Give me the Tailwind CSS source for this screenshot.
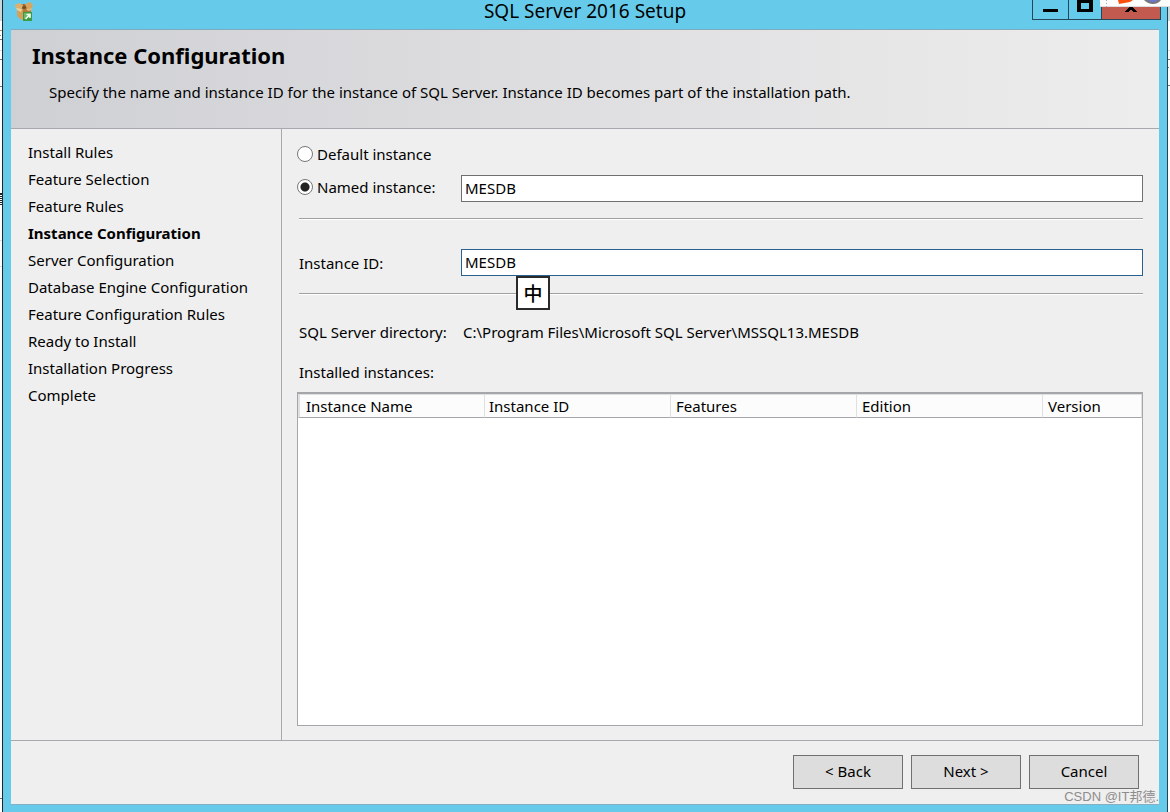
<!DOCTYPE html>
<html lang="en">
<head>
<meta charset="utf-8">
<meta name="viewport" content="width=device-width, initial-scale=1">
<title>SQL Server 2016 Setup</title>
<script src="https://cdn.jsdelivr.net/npm/@tailwindcss/browser@4"></script>
</head>
<body class="flex min-h-screen bg-white font-['Noto_Sans','Noto_Sans_CJK_SC',sans-serif] text-[15px] leading-5 text-black">
<!-- edge of the desktop behind the window, left -->
<div class="w-[2px] shrink-0" aria-hidden="true">
  <svg class="block" width="2" height="812" viewBox="0 0 2 812" shape-rendering="crispEdges">
    <path fill="#c9d6da" d="M0 0h2v21H0z"/>
    <path fill="#b08a5a" d="M0 30h2v1H0zM0 35h1v1H0z"/>
    <path fill="#777" d="M0 39h2v1H0zM0 59h2v1H0zM0 86h2v1H0z"/>
    <path fill="#ddd" d="M0 50h2v1H0zM0 240h2v1H0zM0 266h2v1H0z"/>
    <path fill="#222" d="M0 193h2v2H0zM0 196h2v1H0zM0 198h2v1H0zM0 200h2v1H0zM0 202h2v1H0zM0 204h2v1H0z"/>
    <path fill="#777" d="M0 798h2v1H0z"/>
  </svg>
</div>
<div class="relative flex min-w-0 flex-1 flex-col border-x border-l-[#262626] border-r-[#2b4350] bg-[#66cbea] px-2 pb-[7px]">
  <header class="relative flex h-[29px] shrink-0 items-start justify-center">
    <svg class="absolute left-1 top-0.5" width="19" height="19" viewBox="0 0 19 19" aria-hidden="true">
      <path fill="#d3a05a" d="M2 5l6 2v11l-3-1-3-3z"/>
      <path fill="#b47a35" d="M8 7l8-2v8l-8 5z"/>
      <path fill="#9c6a2c" d="M3 3l6-1 6 1-2 3-4 1-5-2z"/>
      <path fill="#7a4f1c" d="M6 4h6v2l-3 1-3-1z"/>
      <path fill="#dfb06c" d="M0 3l4-2 4 2-1 3-3 1-4-2z"/>
      <path fill="#d8a561" d="M10 2l5-2 3 3-1 3-5 1z"/>
      <path fill="#f0cf9b" d="M1 6l6 1-1 3-4-2z"/>
      <path fill="#e3b878" d="M11 7l5-1 1 2-4 1z"/>
      <path fill="#3b9a46" d="M8 10h9v9H8z"/>
      <path fill="#6cba68" d="M9 11h7v3l-7 3z"/>
      <path fill="none" stroke="#f4fff4" stroke-width="1.500" d="M10.500 17l4-4M11.500 12.500H15V16"/>
    </svg>
    <h1 class="text-[19px] leading-[23px]">SQL Server 2016 Setup</h1>
    <div class="absolute -right-[2px] top-0 flex h-5 border-x border-b border-[#26465a]">
      <button aria-label="Minimize" class="flex w-9 items-start justify-center border-r border-[#26465a]"><svg width="15" height="19" viewBox="0 0 15 19"><path d="M0 9h15v3H0z"/></svg></button>
      <button aria-label="Maximize" class="flex w-[33px] items-start justify-center border-r border-[#26465a]"><svg width="16" height="19" viewBox="0 0 16 19"><path fill-rule="evenodd" d="M0 0h16v12H0zM4 3v6h8V3z"/></svg></button>
      <button aria-label="Close" class="flex w-[58px] items-start justify-center bg-[#c25a50]"><svg width="14" height="19" viewBox="0 0 14 19" shape-rendering="crispEdges"><path d="M5 7h4v1h1v1h1v1h1v1h1v1H9v-1H8v-1H6v1H5v1H1v-1h1v-1h1V9h1V8h1z"/></svg></button>
    </div>
  </header>

  <div class="flex flex-1 flex-col border-y border-t-[#7fa9be] border-b-[#84b0c4] bg-[#efefef]">
    <section class="h-[99px] border-b border-[#a8a9ae] bg-linear-to-r from-[#cfd0d4] via-[#dfdfe1] to-[#ededed] pl-[21px] pt-[9px]">
      <h2 class="text-[22px] font-bold leading-8">Instance Configuration</h2>
      <p class="mt-[11px] pl-[17px]">Specify the name and instance ID for the instance of SQL Server. Instance ID becomes part of the installation path.</p>
    </section>

    <div class="flex flex-1">
      <nav aria-label="Setup steps" class="w-[271px] shrink-0 border-r border-[#a8a9ae] pl-[17px] pt-2.5">
        <ol class="leading-[27px]">
          <li>Install Rules</li>
          <li>Feature Selection</li>
          <li>Feature Rules</li>
          <li class="font-bold" aria-current="step">Instance Configuration</li>
          <li>Server Configuration</li>
          <li>Database Engine Configuration</li>
          <li>Feature Configuration Rules</li>
          <li>Ready to Install</li>
          <li>Installation Progress</li>
          <li>Complete</li>
        </ol>
      </nav>

      <main class="flex min-w-0 flex-1 flex-col pb-3.5 pl-[15px] pr-4 pt-[15px]">
        <label class="flex items-center gap-1 self-start"><input type="radio" name="instance" class="size-4 appearance-none rounded-full border border-[#777] bg-white checked:bg-radial checked:from-[#222] checked:from-[4px] checked:to-white checked:to-[5px]">Default instance</label>
        <div class="mt-[11px] flex items-start">
          <label class="flex w-[164px] shrink-0 items-center gap-1 pt-0.5"><input type="radio" name="instance" checked class="size-4 appearance-none rounded-full border border-[#777] bg-white checked:bg-radial checked:from-[#222] checked:from-[4px] checked:to-white checked:to-[5px]">Named instance:</label>
          <input type="text" aria-label="Named instance" value="MESDB" class="h-[27px] min-w-0 flex-1 border border-[#707070] bg-white px-[3px] pb-0.5">
        </div>
        <hr class="ml-0.5 mt-4 h-0.5 border-b border-t border-b-white border-t-[#a0a0a0]">
        <div class="mt-[29px] flex items-center pl-0.5">
          <label for="instance-id" class="w-[162px] shrink-0">Instance ID:</label>
          <div class="relative flex min-w-0 flex-1">
            <input id="instance-id" type="text" value="MESDB" class="h-[27px] min-w-0 flex-1 border border-[#2a6190] bg-white px-[3px] pb-0.5">
            <div class="absolute left-[55px] top-[27px] flex size-[34px] items-center justify-center border-2 border-[#2a2a2a] bg-white font-['Noto_Sans_CJK_SC',sans-serif] text-[19px] font-medium">中</div>
          </div>
        </div>
        <hr class="ml-0.5 mt-[17px] h-0.5 border-b border-t border-b-white border-t-[#a0a0a0]">
        <p class="mt-[27px] flex pl-0.5"><span class="w-[164px] shrink-0">SQL Server directory:</span><span>C:\Program Files\Microsoft SQL Server\MSSQL13.MESDB</span></p>
        <p id="installed-label" class="mt-5 pl-0.5">Installed instances:</p>
        <div class="mt-2.5 flex-1 border border-t-2 border-[#a5a6aa] bg-white">
          <table aria-labelledby="installed-label" class="w-full table-fixed border-separate border-spacing-0">
            <colgroup><col class="w-[187px]"><col class="w-[186px]"><col class="w-[186px]"><col class="w-[186px]"><col></colgroup>
            <thead>
              <tr class="bg-[#fcfcfc] text-left leading-[22px]">
                <th class="border-y border-l-2 border-r border-[#e0e0e0] border-b-[#a5a6aa] p-0 pl-1.5 font-normal">Instance Name</th>
                <th class="border-y border-r border-[#e0e0e0] border-b-[#a5a6aa] p-0 pl-1 font-normal">Instance ID</th>
                <th class="border-y border-r border-[#e0e0e0] border-b-[#a5a6aa] p-0 pl-[5px] font-normal">Features</th>
                <th class="border-y border-r border-[#e0e0e0] border-b-[#a5a6aa] p-0 pl-[5px] font-normal">Edition</th>
                <th class="border-y border-r border-[#e0e0e0] border-b-[#a5a6aa] p-0 pl-[5px] font-normal">Version</th>
              </tr>
            </thead>
            <tbody></tbody>
          </table>
        </div>
      </main>
    </div>

    <footer class="flex justify-end gap-2 border-t border-[#a8a9ae] pb-[15px] pr-5 pt-3.5">
      <button class="h-[34px] w-[110px] border border-[#707070] bg-[#dddddd] pb-0.5">&lt; Back</button>
      <button class="h-[34px] w-[110px] border border-[#707070] bg-[#dddddd] pb-0.5">Next &gt;</button>
      <button class="h-[34px] w-[110px] border border-[#707070] bg-[#dddddd] pb-0.5">Cancel</button>
    </footer>
  </div>
  <div class="absolute bottom-[5px] right-2 font-['Liberation_Sans','Noto_Sans_CJK_SC',sans-serif] text-[13px] leading-5 text-[#8d8d8d]">CSDN @IT邦德.</div>
</div>
<div class="relative w-0.5 shrink-0" aria-hidden="true">
  <svg class="block" width="2" height="90" viewBox="0 0 2 90" shape-rendering="crispEdges">
    <path fill="#c9d6da" d="M0 7h2v14H0z"/>
    <path fill="#ddd" d="M0 50h2v1H0z"/>
    <path fill="#777" d="M0 59h2v1H0zM0 67h1v1H0zM0 85h2v1H0z"/>
  </svg>
  <!-- input-method toolbar peeking in from the top -->
  <svg class="absolute right-0 top-0" width="70" height="8" viewBox="0 0 70 8">
    <path fill="#fdfdfd" d="M0 0h70v7H0z"/>
    <path fill="#ddd" d="M0 6h70v1H0z"/>
    <path fill="#aaa" d="M6 0h1v1H6zM6 3h1v1H6zM6 6h1v1H6z"/>
    <path fill="#f9500f" d="M18 0h15l-3 2-11 2z"/>
    <path fill="#777" d="M44 0h17q-3 4-8 4t-9-4z"/>
    <path fill="#6b76d8" d="M48 0h10q-2 2-5 2t-5-2z"/>
  </svg>
</div>
</body>
</html>
